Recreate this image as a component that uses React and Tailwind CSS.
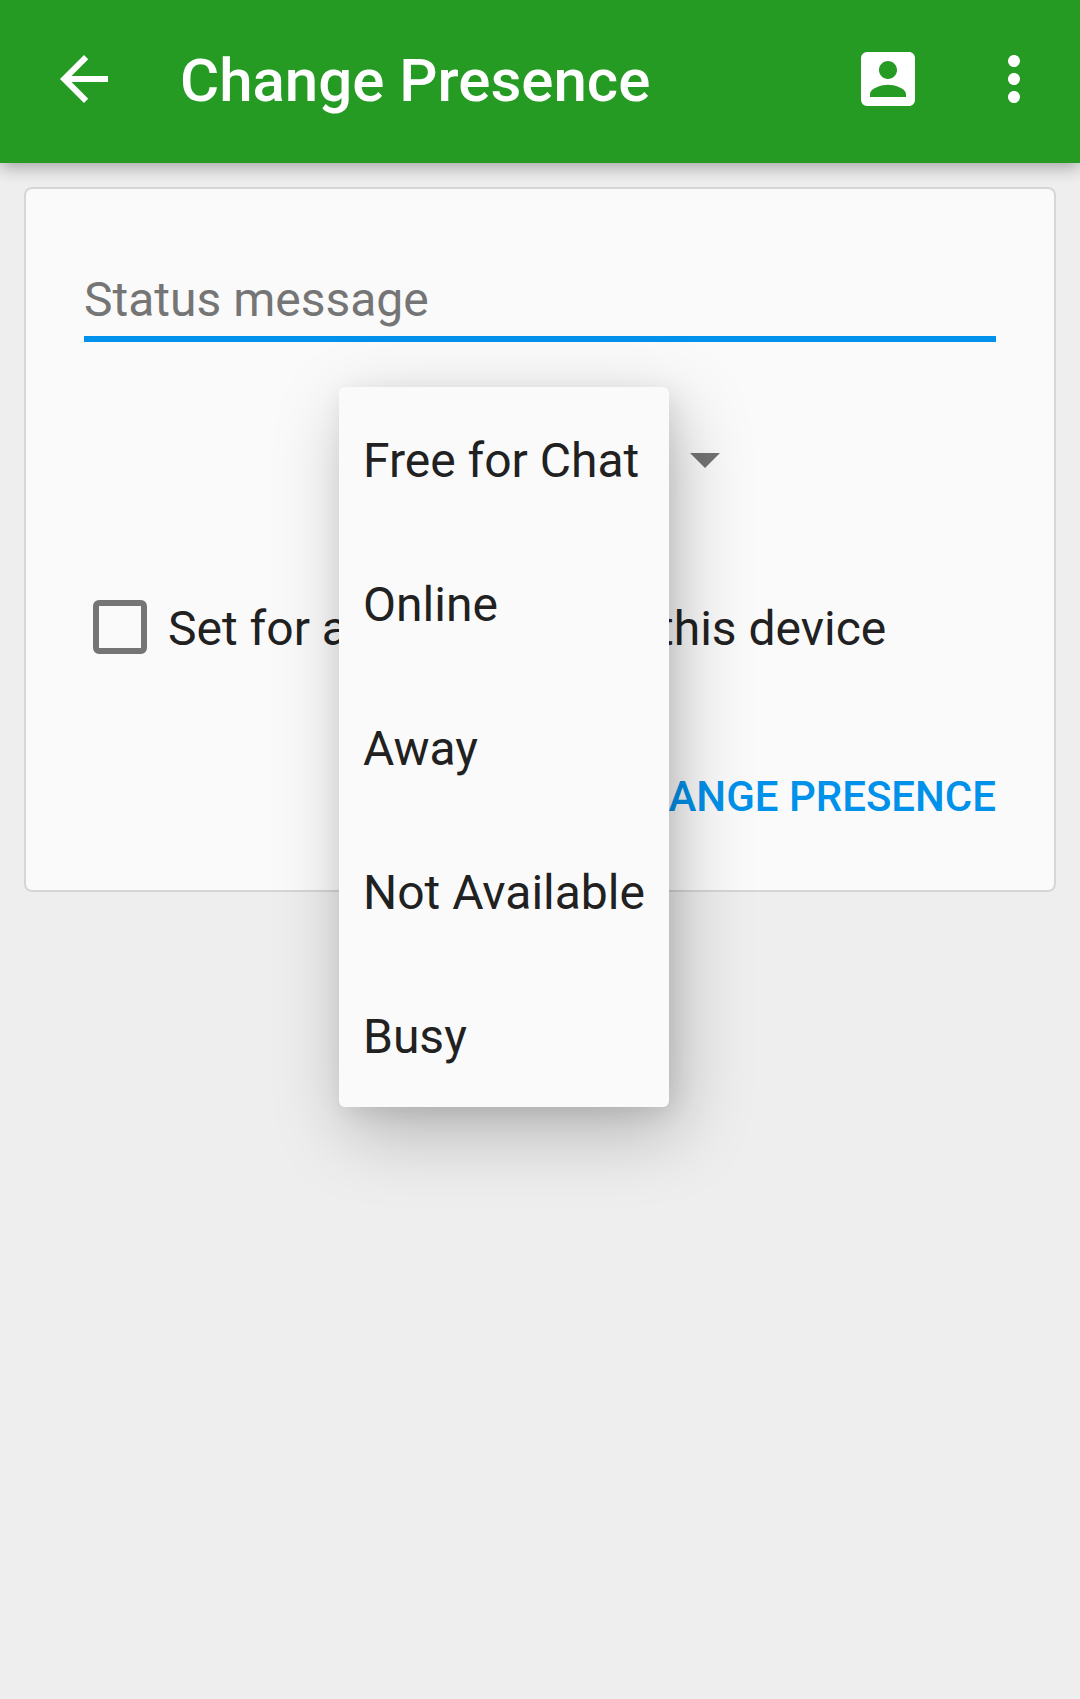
import { useState } from "react";

const presences = ["Free for Chat", "Online", "Away", "Not Available", "Busy"];

function Icon({ d }) {
  return (
    <svg viewBox="0 0 24 24" className="size-18" fill="currentColor" aria-hidden="true">
      <path d={d} />
    </svg>
  );
}

function AppBar() {
  return (
    <header className="relative flex h-[163px] items-center bg-[#259b24] px-[30px] pb-[5px] pl-12 text-white shadow-[0_4px_16px_rgba(0,0,0,0.32)]">
      <button type="button" aria-label="Back" className="shrink-0">
        <Icon d="M20 11H7.83l5.59-5.59L12 4l-8 8 8 8 1.41-1.41L7.83 13H20v-2z" />
      </button>
      <h1 className="ml-15 flex-1 pt-1 text-[60px] leading-[72px] font-medium whitespace-nowrap">
        Change Presence
      </h1>
      <button type="button" aria-label="Contact details" className="shrink-0">
        <Icon d="M3 5v14a2 2 0 0 0 2 2h14c1.1 0 2-.9 2-2V5c0-1.100-.9-2-2-2H5a2 2 0 0 0-2 2zm12 4c0 1.660-1.340 3-3 3s-3-1.340-3-3 1.340-3 3-3 3 1.340 3 3zm-9 8c0-2 4-3.100 6-3.100s6 1.100 6 3.100v1H6v-1z" />
      </button>
      <button type="button" aria-label="More options" className="ml-[54px] shrink-0">
        <Icon d="M12 8c1.1 0 2-.9 2-2s-.9-2-2-2-2 .9-2 2 .9 2 2 2zm0 2c-1.100 0-2 .9-2 2s.9 2 2 2 2-.9 2-2-.9-2-2-2zm0 6c-1.100 0-2 .9-2 2s.9 2 2 2 2-.9 2-2-.9-2-2-2z" />
      </button>
    </header>
  );
}

function PresencePicker({ value, onChange }) {
  return (
    <div className="relative mx-auto mt-[45px] w-[402px]">
      <select
        aria-label="Presence"
        value={value}
        onChange={(e) => onChange(e.target.value)}
        className="block h-36 w-full appearance-none bg-transparent pt-1 pr-18 pl-6 outline-none"
      >
        {presences.map((p) => (
          <option key={p}>{p}</option>
        ))}
      </select>
      <svg
        viewBox="0 0 10 5"
        className="pointer-events-none absolute top-[66px] right-[21px] h-[15px] w-[30px]"
        fill="#737373"
        aria-hidden="true"
      >
        <path d="M0 0h10L5 5z" />
      </svg>
      <div
        role="listbox"
        aria-label="Presence options"
        className="absolute top-0 left-0 z-10 flex flex-col rounded-md bg-[#fafafa] shadow-[9px_24px_72px_rgba(0,0,0,0.25),4px_6px_24px_rgba(0,0,0,0.08)]"
      >
        {presences.map((p) => (
          <button
            key={p}
            type="button"
            role="option"
            aria-selected={p === value}
            onClick={() => onChange(p)}
            className="h-36 px-6 pt-1 text-left whitespace-nowrap"
          >
            {p}
          </button>
        ))}
      </div>
    </div>
  );
}

export default function App() {
  const [presence, setPresence] = useState(presences[0]);
  return (
    <div className="min-h-screen bg-[#eeeeee] font-['Roboto',sans-serif] text-[48px] leading-[56px] text-[#212121]">
      <AppBar />
      <form
        onSubmit={(e) => e.preventDefault()}
        className="m-6 flex flex-col rounded-lg border-2 border-[#d6d6d6] bg-[#fafafa] px-[58px] pt-18 pb-[47px]"
      >
        <input
          type="text"
          aria-label="Status message"
          placeholder="Status message"
          className="h-[81px] w-full border-b-6 border-[#0091ea] bg-transparent pt-0.5 outline-none placeholder:text-[#757575]"
        />
        <PresencePicker value={presence} onChange={setPresence} />
        <label className="mt-12 flex h-24 items-center gap-[21px] pl-[9px] whitespace-nowrap">
          <input
            type="checkbox"
            className="size-[54px] shrink-0 appearance-none rounded-md border-6 border-[#757575] checked:bg-[#0091ea]"
          />
          <span className="pt-1">Set for all accounts on this device</span>
        </label>
        <button
          type="submit"
          className="mt-18 h-24 self-end pt-1 text-[42px] font-medium whitespace-nowrap text-[#0091ea]"
        >
          CHANGE PRESENCE
        </button>
      </form>
    </div>
  );
}
